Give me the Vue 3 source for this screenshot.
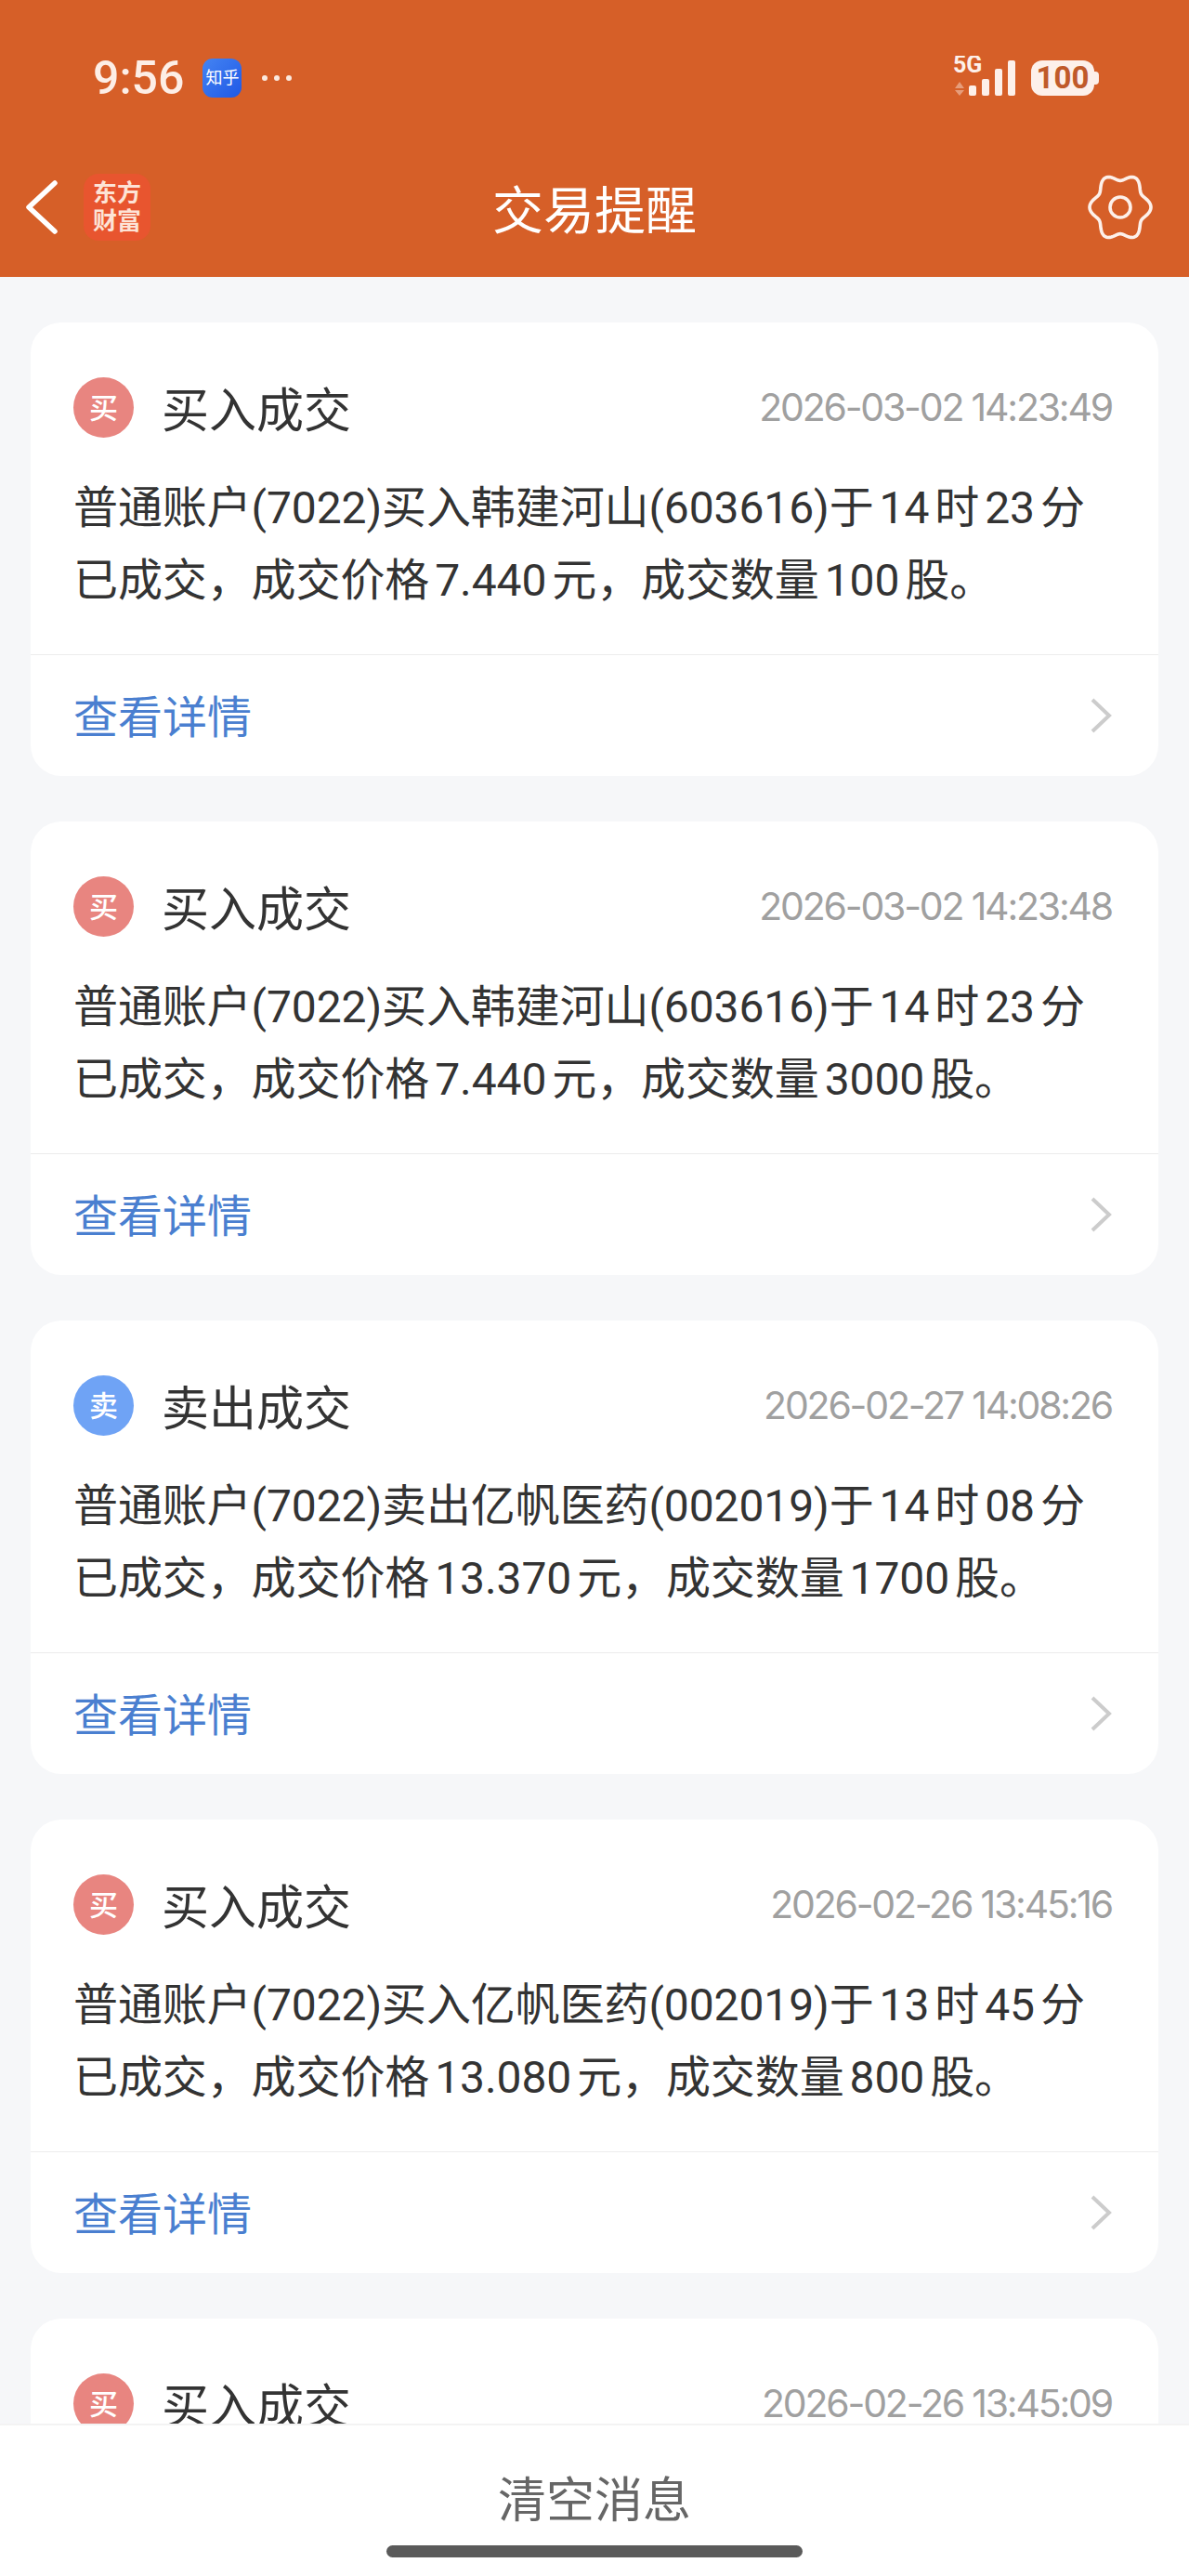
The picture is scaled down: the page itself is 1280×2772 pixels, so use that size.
<template>
  <div class="page">
    <header class="top">
      <div class="status">
        <span class="clock">9:56</span>
        <span class="zhihu">知乎</span>
        <span class="dots"><i></i><i></i><i></i></span>
        <svg class="signal" width="68" height="48" viewBox="0 0 68 48">
          <text x="1" y="18" class="net">5G</text>
          <path d="M8 28 L3 35 H13 Z M3 37 H13 L8 43 Z" fill="#fbe9df" opacity=".45" />
          <rect x="18" y="32" width="8" height="11" rx="2" />
          <rect x="32" y="25" width="8" height="18" rx="2" />
          <rect x="46" y="14" width="8" height="29" rx="2" />
          <rect x="60" y="5" width="8" height="38" rx="2" />
        </svg>
        <span class="battery">100</span>
      </div>
      <div class="nav">
        <div class="nav-left">
          <svg class="back" width="36" height="60" viewBox="0 0 36 60">
            <polyline points="31,4 3,30 31,56" />
          </svg>
          <span class="logo">东方<br />财富</span>
        </div>
        <h1 class="nav-title">交易提醒</h1>
        <div class="nav-right">
          <svg class="gear" width="76" height="74" viewBox="-38 -37 76 74">
            <path :d="gearPath" />
            <circle r="11" />
          </svg>
        </div>
      </div>
    </header>

    <main class="list">
      <section v-for="m in messages" :key="m.time" class="card">
        <div class="card-head">
          <span class="badge" :class="m.side === '卖' ? 'badge-sell' : 'badge-buy'">{{ m.side }}</span>
          <span class="card-title">{{ m.side }}{{ m.side === '卖' ? '出' : '入' }}成交</span>
          <span class="card-time">{{ m.time }}</span>
        </div>
        <p class="card-body">{{ m.text }}</p>
        <div class="card-foot">
          <span class="link">查看详情</span>
          <svg class="arrow" width="24" height="40" viewBox="0 0 24 40">
            <polyline points="3,3 21,20 3,37" />
          </svg>
        </div>
      </section>
    </main>

    <footer class="bottom">
      <span class="clear">清空消息</span>
      <span class="home"></span>
    </footer>
  </div>
</template>

<script setup>
const messages = [
  { side: '买', time: '2026-03-02 14:23:49', text: '普通账户(7022)买入韩建河山(603616)于14时23分已成交，成交价格7.440元，成交数量100股。' },
  { side: '买', time: '2026-03-02 14:23:48', text: '普通账户(7022)买入韩建河山(603616)于14时23分已成交，成交价格7.440元，成交数量3000股。' },
  { side: '卖', time: '2026-02-27 14:08:26', text: '普通账户(7022)卖出亿帆医药(002019)于14时08分已成交，成交价格13.370元，成交数量1700股。' },
  { side: '买', time: '2026-02-26 13:45:16', text: '普通账户(7022)买入亿帆医药(002019)于13时45分已成交，成交价格13.080元，成交数量800股。' },
  { side: '买', time: '2026-02-26 13:45:09', text: '普通账户(7022)买入亿帆医药(002019)于13时45分已成交，成交价格13.080元，成交数量800股。' },
]

// six soft lobes, slightly stretched vertically
function buildGear() {
  const pts = []
  for (let i = 0; i < 120; i++) {
    const a = (i / 120) * Math.PI * 2
    const r = 29.5 + 3.5 * Math.cos(6 * a)
    pts.push(`${(r * Math.cos(a)).toFixed(2)} ${(1.1 * r * Math.sin(a)).toFixed(2)}`)
  }
  return 'M' + pts.join('L') + 'Z'
}
const gearPath = buildGear()
</script>

<style>
html, body { margin: 0; background: #f6f7f9; }
</style>

<style scoped>
.page {
  width: 1280px;
  height: 2772px;
  display: flex;
  flex-direction: column;
  overflow: hidden;
  background: #f6f7f9;
  font-family: Inter, "Noto Sans CJK SC", sans-serif;
  color: #333;
}

.top { height: 298px; flex: none; background: #d65f28; }

.status {
  height: 128px;
  padding: 20px 97px 0 100px;
  display: flex;
  align-items: center;
  color: #fdeee6;
}
.clock { font-family: Roboto, sans-serif; font-size: 50px; font-weight: 500; line-height: 1; }
.zhihu {
  width: 42px;
  height: 42px;
  margin-left: 20px;
  border-radius: 11px;
  background: linear-gradient(135deg, #4484f2, #1f58e6);
  color: #fff;
  font-size: 18px;
  line-height: 42px;
  text-align: center;
}
.dots { display: flex; gap: 7px; margin-left: 22px; }
.dots i { width: 6px; height: 6px; border-radius: 50%; background: #fbe9df; }
.signal { margin-left: auto; fill: #fdf0ea; }
.net { font-family: Roboto, sans-serif; font-size: 25px; font-weight: 700; }
.battery {
  position: relative;
  width: 68px;
  height: 38px;
  margin: 0 5px 0 17px;
  border-radius: 12px;
  background: #fdf0ea;
  color: #c05a2a;
  font-family: Roboto, sans-serif;
  font-size: 33px;
  font-weight: 700;
  line-height: 38px;
  text-align: center;
}
.battery::after {
  content: "";
  position: absolute;
  right: -5px;
  top: 12px;
  width: 5px;
  height: 14px;
  border-radius: 0 4px 4px 0;
  background: #fdf0ea;
}

.nav {
  height: 150px;
  display: grid;
  grid-template-columns: 1fr auto 1fr;
  align-items: center;
  padding: 0 28px;
}
.nav-left { display: flex; align-items: center; }
.back { fill: none; stroke: #fff; stroke-width: 5.5; stroke-linecap: round; stroke-linejoin: round; }
.logo {
  width: 72px;
  height: 72px;
  margin-left: 26px;
  border-radius: 16px;
  background: #e8552f;
  color: #fde3d6;
  font-size: 26px;
  font-weight: 700;
  line-height: 30px;
  padding-top: 6px;
  box-sizing: border-box;
  text-align: center;
}
.nav-title { margin: 5px 0 0; font-size: 55px; font-weight: 400; line-height: 60px; color: #fff; }
.nav-right { display: flex; justify-content: flex-end; padding-right: 8px; }
.gear { fill: none; stroke: #fdf0ea; stroke-width: 3.6; stroke-linejoin: round; }

.list {
  flex: 1;
  min-height: 0;
  overflow: hidden;
  padding: 49px 33px 0;
  display: flex;
  flex-direction: column;
  gap: 49px;
}

.card { flex: none; height: 488px; border-radius: 33px; background: #fff; box-sizing: border-box; }
.card-head { display: flex; align-items: center; padding: 59px 50px 0 46px; }
.badge {
  width: 65px;
  height: 65px;
  border-radius: 50%;
  color: #fff;
  font-size: 31px;
  font-weight: 500;
  line-height: 65px;
  text-align: center;
}
.badge-buy { background: #e88580; }
.badge-sell { background: #6fa3f5; }
.card-title { height: 65px; margin-left: 30px; font-size: 51px; line-height: 71px; }
.card-time { margin-left: auto; font-size: 41px; line-height: 65px; letter-spacing: -2.2px; color: #a0a0a0; }
.card-body {
  margin: 37px 46px 40px;
  height: 156px;
  font-family: Roboto, "Noto Sans CJK SC", sans-serif;
  font-size: 48px;
  line-height: 78px;
  letter-spacing: -0.1px;
  text-autospace: normal;
}
.card-foot {
  height: 131px;
  border-top: 1px solid #ececec;
  box-sizing: border-box;
  display: flex;
  align-items: center;
  justify-content: space-between;
  padding: 0 50px 0 46px;
}
.link { margin-bottom: 5px; font-size: 48px; color: #4a7fd0; }
.arrow { fill: none; stroke: #cccccc; stroke-width: 4; }

.bottom {
  height: 164px;
  flex: none;
  box-sizing: border-box;
  border-top: 2px solid #f3f3f3;
  background: #fff;
  display: flex;
  flex-direction: column;
  align-items: center;
  padding-top: 50px;
}
.clear { margin-top: 1px; font-size: 52px; line-height: 60px; color: #666; }
.home { width: 448px; height: 13px; margin-top: 18px; border-radius: 7px; background: #5a5a5a; }
</style>
